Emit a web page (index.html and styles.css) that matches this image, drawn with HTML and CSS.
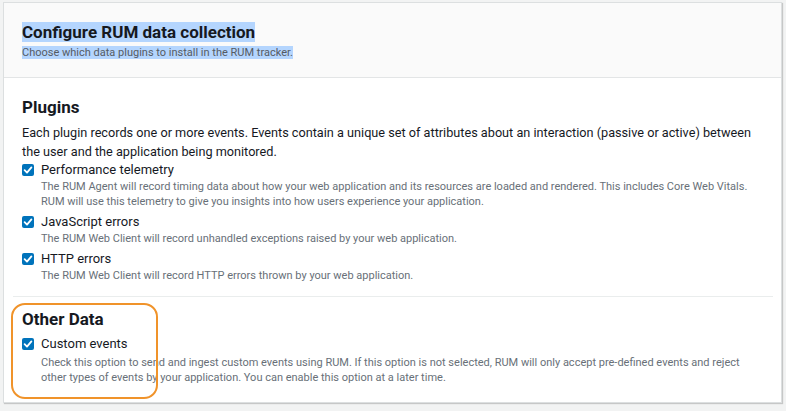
FILE: index.html
```html
<!DOCTYPE html>
<html>
<head>
<meta charset="UTF-8">
<meta name="viewport" content="width=device-width, initial-scale=1.0">
<title>Configure RUM data collection</title>
<link rel="stylesheet" href="styles.css">
</head>
<body>

<div class="panel">

  <div class="panel-header">
    <h2><span class="sel">Configure RUM data collection</span></h2>
    <p class="sub"><span class="sel">Choose which data plugins to install in the RUM tracker.</span></p>
  </div>

  <div class="section">
    <h3>Plugins</h3>
    <p class="intro">Each plugin records one or more events. Events contain a unique set of attributes about an interaction (passive or active) between the user and the application being monitored.</p>

    <div class="option">
      <span class="check"><svg viewBox="0 0 12 12" width="12" height="12"><path d="M2.6 6.2 L5 8.6 L9.4 3.4" fill="none" stroke="#fff" stroke-width="1.8" stroke-linecap="round" stroke-linejoin="round"/></svg></span>
      <div>
        <div class="label">Performance telemetry</div>
        <div class="desc">The RUM Agent will record timing data about how your web application and its resources are loaded and rendered. This includes Core Web Vitals. RUM will use this telemetry to give you insights into how users experience your application.</div>
      </div>
    </div>

    <div class="option">
      <span class="check"><svg viewBox="0 0 12 12" width="12" height="12"><path d="M2.6 6.2 L5 8.6 L9.4 3.4" fill="none" stroke="#fff" stroke-width="1.8" stroke-linecap="round" stroke-linejoin="round"/></svg></span>
      <div>
        <div class="label">JavaScript errors</div>
        <div class="desc">The RUM Web Client will record unhandled exceptions raised by your web application.</div>
      </div>
    </div>

    <div class="option">
      <span class="check"><svg viewBox="0 0 12 12" width="12" height="12"><path d="M2.6 6.2 L5 8.6 L9.4 3.4" fill="none" stroke="#fff" stroke-width="1.8" stroke-linecap="round" stroke-linejoin="round"/></svg></span>
      <div>
        <div class="label">HTTP errors</div>
        <div class="desc">The RUM Web Client will record HTTP errors thrown by your web application.</div>
      </div>
    </div>
  </div>

  <div class="divider"></div>

  <div class="section other">
    <h3>Other Data</h3>
    <div class="option">
      <span class="check"><svg viewBox="0 0 12 12" width="12" height="12"><path d="M2.6 6.2 L5 8.6 L9.4 3.4" fill="none" stroke="#fff" stroke-width="1.8" stroke-linecap="round" stroke-linejoin="round"/></svg></span>
      <div>
        <div class="label">Custom events</div>
        <div class="desc">Check this option to send and ingest custom events using RUM. If this option is not selected, RUM will only accept pre-defined events and reject other types of events by your application. You can enable this option at a later time.</div>
      </div>
    </div>
    <!-- annotation ring -->
    <div class="ring"></div>
  </div>

</div>

</body>
</html>
```

FILE: styles.css
```css
body{
    margin:0;
    padding:2px 4px 8px 3px;
    background:#f2f3f3;
    font-family:Roboto, Arial, sans-serif;
    color:#16191f;
}

.panel{
    background:white;
    border:1px solid #dcdfe0;
    box-shadow:1px 1px 1px rgba(0,0,0,0.18);
    height:401px;
    box-sizing:border-box;
}

.panel-header{
    background:#fafafa;
    border-bottom:1px solid #e3e5e6;
    padding:18px 18px 17px;
}

.panel-header h2{
    margin:0;
    font-size:17px;
    font-weight:bold;
    line-height:22px;
}

.sel{
    background:#b4d5fe;
}

.sub{
    margin:2px 0 0;
    font-size:11px;
    line-height:15px;
    color:#545b64;
}

.section{
    padding:18px 12px 9px 18px;
}

.section h3{
    margin:0 0 5px;
    font-size:17px;
    font-weight:bold;
    line-height:22px;
}

.intro{
    margin:0;
    font-size:12.7px;
    line-height:19px;
}

.option{
    display:flex;
    gap:7px;
    margin-bottom:4px;
}

.check{
    width:12px;
    height:12px;
    margin-top:3px;
    border-radius:2px;
    background:#0073bb;
    flex:none;
    display:flex;
}

.label{
    font-size:13px;
    line-height:18px;
}

.desc{
    font-size:11px;
    line-height:15px;
    color:#687078;
}

.divider{
    margin:0 8px 0 9px;
    border-top:1px solid #eaeded;
}

.other{
    position:relative;
    padding-top:11px;
}

.other h3{
    margin-bottom:5px;
}

.other .desc{
    margin-top:2px;
    max-width:720px;
}

.ring{
    position:absolute;
    left:7px;
    top:6px;
    width:143px;
    height:92px;
    border:2px solid #f0932a;
    border-radius:14px;
}
```
